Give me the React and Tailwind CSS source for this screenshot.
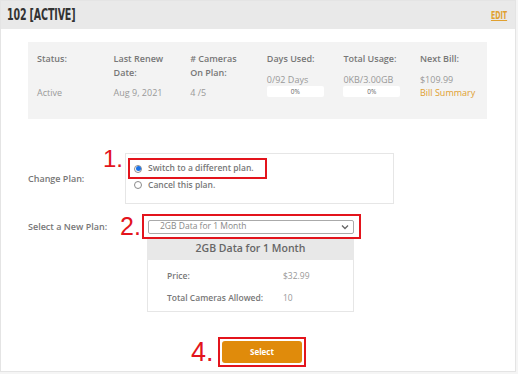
import React from "react";

const Radio = ({ checked }) => (
  <span className="inline-flex h-[8px] w-[8px] items-center justify-center rounded-full border border-[#8a8a8a] bg-white">
    {checked && <span className="h-[5px] w-[5px] rounded-full bg-[#1a73e8]" />}
  </span>
);

const Stat = ({ label, children, gap }) => (
  <div className="flex flex-col">
    <div className="text-[9px] leading-[13.5px] font-semibold text-[#777]">{label}</div>
    <div className={gap}>{children}</div>
  </div>
);

const Bar = () => (
  <div className="h-[11px] w-[57px] rounded-[2px] bg-white text-center text-[6.5px] leading-[11px] text-[#666]">0%</div>
);

export default function App() {
  return (
    <div className="h-[374px] w-[518px] bg-[#f5f5f5] font-['Open_Sans',sans-serif]">
      <div className="h-[372px] w-[516px] border border-[#e4e4e4] bg-white">
        <div className="flex h-[28px] items-center justify-between bg-[#e9e9e9] pl-[6px] pr-[8px]">
          <span className="inline-block origin-left scale-x-[0.66] font-['DejaVu_Sans_Condensed',sans-serif] text-[16px] font-bold tracking-[-0.2px] text-[#333]">
            102 [ACTIVE]
          </span>
          <span className="inline-block origin-right scale-x-[0.7] font-['DejaVu_Sans_Condensed',sans-serif] text-[10px] font-bold text-[#e0a030] underline">
            EDIT
          </span>
        </div>

        <div className="pl-[27px]">
          <div className="mt-[13px] h-[77px] w-[459px] bg-[#f3f3f3] pl-[9px] pt-[10px]">
            <div className="grid grid-cols-[repeat(6,76.6px)] text-[9px] text-[#999]">
              <Stat label="Status:" gap="mt-[20px] leading-[13px]">Active</Stat>
              <Stat label={<>Last Renew<br />Date:</>} gap="mt-[6.5px] leading-[13px]">Aug 9, 2021</Stat>
              <Stat label={<>&#35; Cameras<br />On Plan:</>} gap="mt-[6.5px] leading-[13px]">4 /5</Stat>
              <Stat label="Days Used:" gap="mt-[7px]">
                <div className="leading-[13px]">0/92 Days</div>
                <Bar />
              </Stat>
              <Stat label="Total Usage:" gap="mt-[7px]">
                <div className="leading-[13px]">0KB/3.00GB</div>
                <Bar />
              </Stat>
              <Stat label="Next Bill:" gap="mt-[7px]">
                <div className="leading-[13px]">$109.99</div>
                <div className="leading-[13px] text-[#e0a030]">Bill Summary</div>
              </Stat>
            </div>
          </div>

          <div className="mt-[34px] flex items-center">
            <div className="w-[97px] text-[9px] font-semibold text-[#777]">Change Plan:</div>
            <div className="relative h-[51px] w-[269px] border border-[#e6e6e6] bg-white">
              <span className="absolute left-[-23px] top-[-9px] font-['Liberation_Sans',sans-serif] text-[24px] leading-[28px] text-[#e3141c]">1.</span>
              <div className="ml-[2px] mt-[4px] flex h-[21px] w-[139px] items-center border-2 border-[#e3141c] pl-[4px]">
                <Radio checked />
                <span className="ml-[6px] text-[8.5px] font-semibold text-[#777]">Switch to a different plan.</span>
              </div>
              <div className="ml-[8px] mt-[0px] flex h-[12px] items-center">
                <Radio />
                <span className="ml-[6px] text-[8.5px] font-semibold text-[#777]">Cancel this plan.</span>
              </div>
            </div>
          </div>

          <div className="mt-[10px] flex items-center">
            <div className="w-[114px] text-[9px] font-semibold text-[#777]">Select a New Plan:</div>
            <div className="relative z-10 flex h-[25px] w-[219px] items-center border-2 border-[#e3141c] pl-[4px]">
              <span className="absolute left-[-24px] top-[-4px] font-['Liberation_Sans',sans-serif] text-[25px] leading-[28px] text-[#e3141c]">2.</span>
              <div className="flex h-[14px] w-[206px] items-center justify-between rounded-[2px] border border-[#aaa] bg-white pl-[11px] pr-[4px] text-[8.5px] text-[#888]">
                <span>2GB Data for 1 Month</span>
                <svg width="8" height="6" viewBox="0 0 8 6"><path d="M1 1.5 L4 4.5 L7 1.5" fill="none" stroke="#666" strokeWidth="1.3" /></svg>
              </div>
            </div>
          </div>

          <div className="-mt-[2px] ml-[119px] w-[207px]">
            <div className="flex h-[23px] items-center justify-center bg-[#e8e8e8] text-[10.5px] font-semibold text-[#666]">
              2GB Data for 1 Month
            </div>
            <div className="h-[52px] border border-t-0 border-[#e6e6e6] bg-white pl-[19px] pt-[5px] text-[8.5px]">
              <div className="grid grid-cols-[116px_1fr] leading-[22px]">
                <span className="font-semibold text-[#777]">Price:</span>
                <span className="text-[#999]">$32.99</span>
                <span className="font-semibold text-[#777]">Total Cameras Allowed:</span>
                <span className="text-[#999]">10</span>
              </div>
            </div>
          </div>

          <div className="ml-[190px] mt-[25px] flex items-center">
            <div className="relative flex h-[30px] w-[88px] items-center justify-center border-2 border-[#e3141c]">
              <span className="absolute left-[-29px] top-[-2px] font-['Liberation_Sans',sans-serif] text-[27px] leading-[30px] text-[#e3141c]">4.</span>
              <button className="h-[22px] w-[80px] rounded-[3px] bg-[#e08b0b] text-[8px] font-bold text-white">Select</button>
            </div>
          </div>
        </div>
      </div>
    </div>
  );
}
